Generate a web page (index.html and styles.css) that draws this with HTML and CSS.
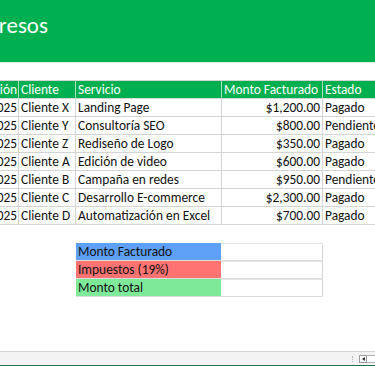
FILE: index.html
```html
<!DOCTYPE html>
<html lang="es">
<head>
<meta charset="utf-8">
<title>Registro de Ingresos</title>
<link rel="stylesheet" href="styles.css">
</head>
<body>
<div class="sheet">
  <div class="banner">
    <div class="title-clip"><span>Registro de Ingresos</span></div>
  </div>
  <div class="grid data">
    <div class="c a h"><span>Fecha de emisión</span></div>
    <div class="c h">Cliente</div>
    <div class="c h">Servicio</div>
    <div class="c h">Monto Facturado</div>
    <div class="c h last">Estado</div>

    <div class="c a"><span>01/01/2025</span></div>
    <div class="c">Cliente X</div>
    <div class="c">Landing Page</div>
    <div class="c r">$1,200.00</div>
    <div class="c last">Pagado</div>

    <div class="c a"><span>05/01/2025</span></div>
    <div class="c">Cliente Y</div>
    <div class="c">Consultoría SEO</div>
    <div class="c r">$800.00</div>
    <div class="c last">Pendiente</div>

    <div class="c a"><span>10/01/2025</span></div>
    <div class="c">Cliente Z</div>
    <div class="c">Rediseño de Logo</div>
    <div class="c r">$350.00</div>
    <div class="c last">Pagado</div>

    <div class="c a"><span>15/01/2025</span></div>
    <div class="c">Cliente A</div>
    <div class="c">Edición de video</div>
    <div class="c r">$600.00</div>
    <div class="c last">Pagado</div>

    <div class="c a"><span>20/01/2025</span></div>
    <div class="c">Cliente B</div>
    <div class="c">Campaña en redes</div>
    <div class="c r">$950.00</div>
    <div class="c last">Pendiente</div>

    <div class="c a"><span>25/01/2025</span></div>
    <div class="c">Cliente C</div>
    <div class="c">Desarrollo E-commerce</div>
    <div class="c r">$2,300.00</div>
    <div class="c last">Pagado</div>

    <div class="c a"><span>30/01/2025</span></div>
    <div class="c">Cliente D</div>
    <div class="c">Automatización en Excel</div>
    <div class="c r">$700.00</div>
    <div class="c last">Pagado</div>
  </div>

  <div class="summary">
    <div class="s lbl blue">Monto Facturado</div>
    <div class="s val"></div>
    <div class="s lbl red">Impuestos (19%)</div>
    <div class="s val"></div>
    <div class="s lbl green">Monto total</div>
    <div class="s val"></div>
  </div>

  <div class="status">
    <div class="status-tools">
      <span class="dots"></span>
      <span class="scroll-btn"><span class="tri"></span></span>
      <span class="scroll-track"></span>
    </div>
  </div>
</div>
</body>
</html>
```

FILE: styles.css
```css
* { box-sizing: border-box; }

html, body {
  margin: 0;
  padding: 0;
  background: #ffffff;
}

body {
  width: 375px;
  height: 366px;
  overflow: hidden;
  font-family: "Carlito", Calibri, Lato, "Liberation Sans", sans-serif;
  color: #111111;
}

.sheet {
  height: 366px;
  display: flex;
  flex-direction: column;
}

.banner {
  height: 63px;
  background: #00b050;
  border-bottom: 1px solid #d6f0df;
  padding-top: 12px;
  flex-shrink: 0;
}

.title-clip {
  width: 48px;
  display: flex;
  justify-content: flex-end;
  overflow: hidden;
  white-space: nowrap;
  color: #ffffff;
  font-size: 23px;
  line-height: 26px;
}

.grid {
  display: grid;
  grid-template-columns: 19px 57px 146px 101px 1fr;
  margin-top: 17px;
  border-top: 1px solid #d4d4d4;
  flex-shrink: 0;
}

.c {
  height: 18px;
  border-right: 1px solid #d4d4d4;
  border-bottom: 1px solid #d4d4d4;
  font-size: 13.4px;
  line-height: 17px;
  padding: 0 2px;
  white-space: nowrap;
  overflow: hidden;
}

.c.last { border-right: none; }

.c.a {
  display: flex;
  justify-content: flex-end;
  padding: 0 1px 0 0;
}

.c.r { text-align: right; }

.c.h {
  background: #00b050;
  color: #ffffff;
  border-right-color: #a9dfbd;
}

.summary {
  display: grid;
  grid-template-columns: 145px 102px;
  margin: 18px 0 0 76px;
  width: 247px;
  flex-shrink: 0;
}

.s {
  height: 18px;
  font-size: 13.4px;
  line-height: 17px;
  padding: 0 2px;
  white-space: nowrap;
  border-bottom: 1px solid #dcdcdc;
}

.s.lbl { color: #111111; }
.s.blue { background: #5fa0f7; }
.s.red { background: #ff7373; }
.s.green { background: #7fe99a; }

.s.val {
  background: #ffffff;
  border-right: 1px solid #d6d6d6;
  border-top: 1px solid #e4e4e4;
}

.status {
  margin-top: auto;
  height: 15px;
  background: #f3f3f3;
  border-top: 1px solid #d2d2d2;
  border-bottom: 1px solid #217346;
  display: flex;
  justify-content: flex-end;
  flex-shrink: 0;
}

.status-tools {
  display: flex;
  align-items: center;
  gap: 6px;
  margin-right: -4px;
}

.dots {
  width: 1px;
  height: 6px;
  border-left: 1px dotted #b9b9b9;
}

.scroll-btn {
  width: 8px;
  height: 8px;
  border: 1px solid #9a9a9a;
  background: #ffffff;
  display: flex;
  align-items: center;
  justify-content: center;
  margin-right: -6px;
}

.tri {
  width: 0;
  height: 0;
  border-top: 2px solid transparent;
  border-bottom: 2px solid transparent;
  border-right: 3px solid #333333;
}

.scroll-track {
  width: 12px;
  height: 8px;
  border: 1px solid #b4b4b4;
  border-left: none;
  background: #ffffff;
}
```
